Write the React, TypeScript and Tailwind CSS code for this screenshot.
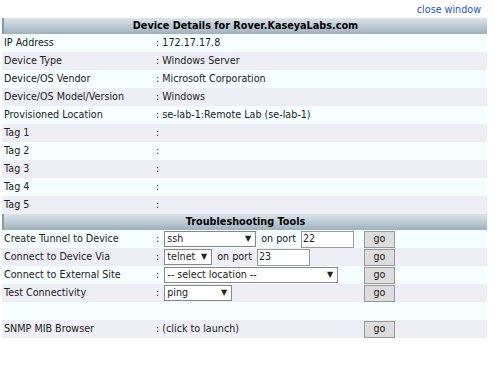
import React from 'react';

const details: [string, string][] = [
  ['IP Address', '172.17.17.8'],
  ['Device Type', 'Windows Server'],
  ['Device/OS Vendor', 'Microsoft Corporation'],
  ['Device/OS Model/Version', 'Windows'],
  ['Provisioned Location', 'se-lab-1:Remote Lab (se-lab-1)'],
  ['Tag 1', ''],
  ['Tag 2', ''],
  ['Tag 3', ''],
  ['Tag 4', ''],
  ['Tag 5', ''],
];

const rowBg = (i: number) => (i % 2 === 0 ? 'bg-[#f5ffff]' : 'bg-[#eeeef6]');

function Header({ title }: { title: string }) {
  return (
    <div className="h-[16px] flex items-center justify-center border-l-2 border-[#8a9aa6] bg-gradient-to-b from-[#dde4ea] to-[#9fb1bd] text-[9.7px] font-bold text-black leading-none">
      {title}
    </div>
  );
}

function Select({ value, w }: { value: string; w: string }) {
  return (
    <div className={`${w} h-[16px] bg-white border border-[#888] flex items-center justify-between pl-[2px] pr-[4px]`}>
      <span>{value}</span>
      <span className="text-[8px] text-[#222]">▼</span>
    </div>
  );
}

function Port({ value, w }: { value: string; w: string }) {
  return (
    <div className={`${w} h-[17px] bg-white border border-[#999] flex items-center pl-[1px]`}>
      {value}
    </div>
  );
}

function Go() {
  return (
    <div className="w-[31px] h-[17px] bg-[#dddddd] border border-[#999] flex items-center justify-center">
      go
    </div>
  );
}

function Row({ i, label, children, go }: { i: number; label: string; children?: React.ReactNode; go?: boolean }) {
  return (
    <div className={`h-[18px] flex items-center ${rowBg(i)}`}>
      <div className="w-[154px] pl-[2px] shrink-0">{label}</div>
      <div className="w-[208px] shrink-0 flex items-center gap-[5px]">{children}</div>
      {go && <Go />}
    </div>
  );
}

export default function App() {
  return (
    <div
      className="w-[493px] h-[372px] bg-white text-[9.6px] text-[#222] leading-none"
      style={{ fontFamily: '"DejaVu Sans", Verdana, sans-serif' }}
    >
      <div className="h-[18px] flex items-center justify-end pr-[12px] pt-[2px]">
        <a className="text-[#2255cc]">close window</a>
      </div>
      <div className="ml-[2px] w-[485px]">
        <Header title="Device Details for Rover.KaseyaLabs.com" />
        {details.map(([label, value], i) => (
          <div key={label} className={`h-[18px] flex items-center ${rowBg(i)}`}>
            <div className="w-[154px] pl-[2px] shrink-0">{label}</div>
            <div>: {value}</div>
          </div>
        ))}
        <Header title="Troubleshooting Tools" />
        <Row i={0} label="Create Tunnel to Device" go>
          <span>:</span>
          <Select value="ssh" w="w-[92px]" />
          <span>on port</span>
          <Port value="22" w="w-[53px]" />
        </Row>
        <Row i={1} label="Connect to Device Via" go>
          <span>:</span>
          <Select value="telnet" w="w-[48px]" />
          <span>on port</span>
          <Port value="23" w="w-[53px]" />
        </Row>
        <Row i={2} label="Connect to External Site" go>
          <span>:</span>
          <Select value="-- select location --" w="w-[174px]" />
        </Row>
        <Row i={3} label="Test Connectivity" go>
          <span>:</span>
          <Select value="ping" w="w-[68px]" />
        </Row>
        <div className="h-[18px] bg-[#f5ffff]" />
        <Row i={1} label="SNMP MIB Browser" go>
          <span>: (click to launch)</span>
        </Row>
      </div>
    </div>
  );
}
